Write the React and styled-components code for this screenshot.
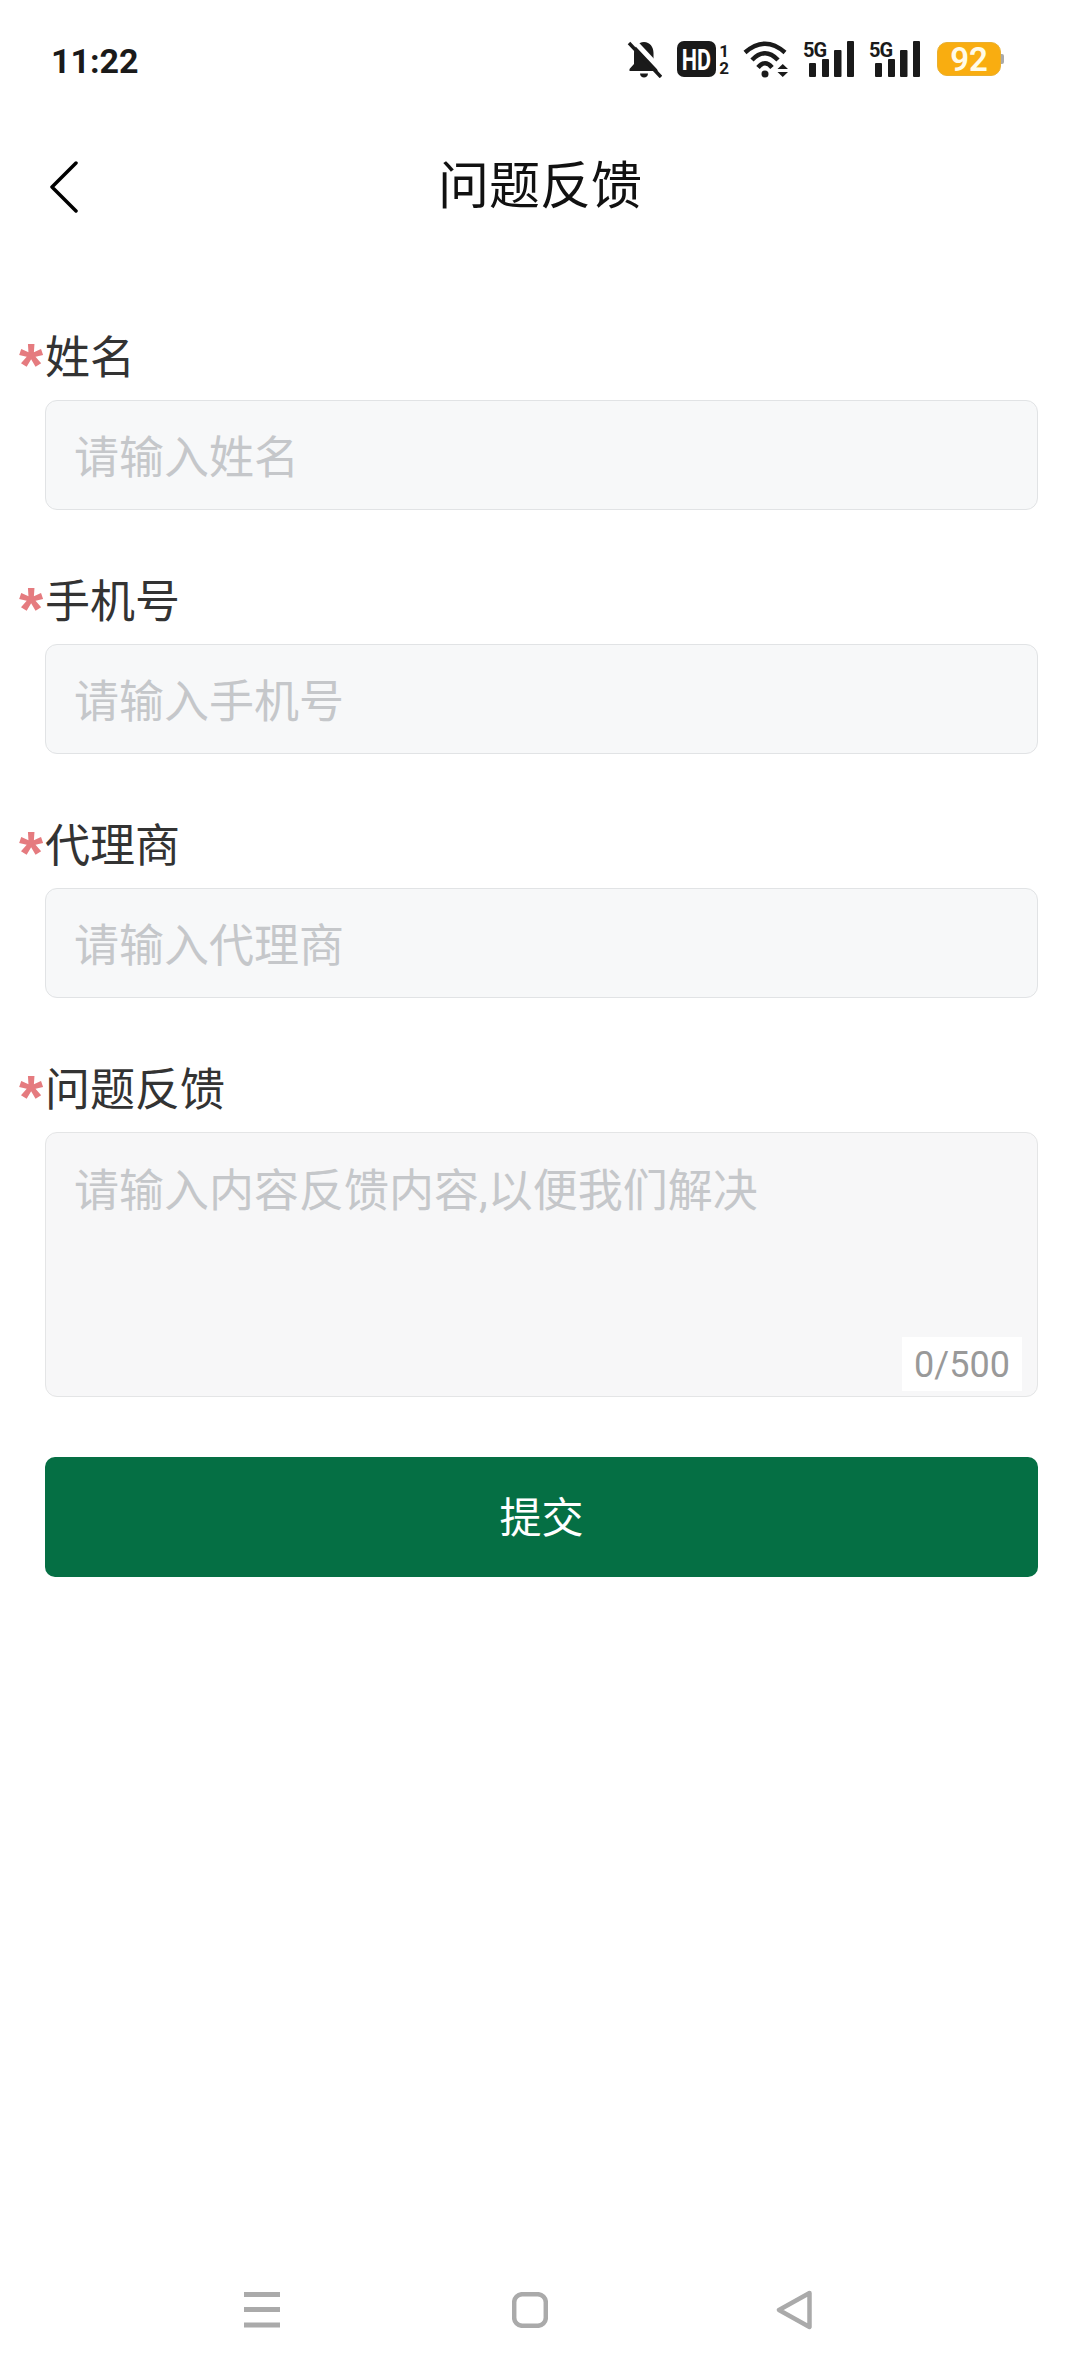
import styled, { createGlobalStyle } from "styled-components";

const fields = [
    { label: "姓名", placeholder: "请输入姓名" },
    { label: "手机号", placeholder: "请输入手机号" },
    { label: "代理商", placeholder: "请输入代理商" },
];

function Signal() {
    return (
        <SignalBox>
            <FiveG>5G</FiveG>
            <svg width="51" height="36" viewBox="0 0 51 36">
                <rect x="6" y="22" width="7" height="14" rx="1" fill="#1a1a1a" />
                <rect x="19" y="18" width="7" height="18" rx="1" fill="#1a1a1a" />
                <rect x="31" y="9" width="7.500" height="27" rx="1" fill="#1a1a1a" />
                <rect x="44" y="0" width="7" height="36" rx="1" fill="#1a1a1a" />
            </svg>
        </SignalBox>
    );
}

export default function App() {
    return (
        <Page>
            <GlobalStyle />
            <StatusBar>
                <Time>11:22</Time>
                <StatusIcons>
                    <svg width="35" height="37" viewBox="0 0 35 37">
                        <path d="M17 1c-6 0-10 5-10 11v11l-4.500 5v2h28v-2l-4-5V12c0-6-3.500-11-9.500-11z" fill="#1a1a1a" />
                        <path d="M13 32.500h8c0 2.500-2 4-4 4s-4-1.500-4-4z" fill="#1a1a1a" />
                        <path d="M6 -1L38 33" stroke="#fff" strokeWidth="5" />
                        <path d="M2 2L34 36" stroke="#1a1a1a" strokeWidth="3.500" />
                    </svg>
                    <HdGroup>
                        <HdBox><HdText>HD</HdText></HdBox>
                        <SimNumbers>
                            <span>1</span>
                            <span>2</span>
                        </SimNumbers>
                    </HdGroup>
                    <svg width="45" height="37" viewBox="0 0 45 37">
                        <path d="M2 11.500Q22 -6 42 11.500" fill="none" stroke="#1a1a1a" strokeWidth="4.500" />
                        <path d="M9 19Q22 5.500 35 19" fill="none" stroke="#1a1a1a" strokeWidth="4.500" />
                        <path d="M15 26.500Q22 18 29 26.500" fill="none" stroke="#1a1a1a" strokeWidth="4.500" />
                        <circle cx="22" cy="33" r="3.500" fill="#1a1a1a" />
                        <path d="M34.500 28l5.250-5 5.250 5zM34.500 31l5.250 5 5.250-5z" fill="#1a1a1a" />
                    </svg>
                    <Signal />
                    <Signal />
                    <Battery>
                        <BatteryBody>92</BatteryBody>
                        <BatteryCap />
                    </Battery>
                </StatusIcons>
            </StatusBar>

            <Header>
                <BackIcon width="30" height="52" viewBox="0 0 30 52">
                    <path d="M27 2 L3 26 L27 50" fill="none" stroke="#000" strokeWidth="3.500" strokeLinecap="round" strokeLinejoin="round" />
                </BackIcon>
                <Title>问题反馈</Title>
            </Header>

            <Form>
                {fields.map((field) => (
                    <Field key={field.label}>
                        <Label><Star>*</Star>{field.label}</Label>
                        <Input placeholder={field.placeholder} />
                    </Field>
                ))}
                <Field>
                    <Label><Star>*</Star>问题反馈</Label>
                    <AreaBox>
                        <Area placeholder="请输入内容反馈内容,以便我们解决" />
                        <Counter>0/500</Counter>
                    </AreaBox>
                </Field>
                <SubmitButton type="button">提交</SubmitButton>
            </Form>

            <NavBar>
                <svg width="36" height="36" viewBox="0 0 36 36">
                    <rect y="0" width="36" height="5" fill="#aaa" />
                    <rect y="15" width="36" height="5" fill="#aaa" />
                    <rect y="30.500" width="36" height="5" fill="#aaa" />
                </svg>
                <svg width="36" height="36" viewBox="0 0 36 36">
                    <rect x="2.200" y="2.200" width="31.600" height="31.600" rx="8" fill="none" stroke="#aaa" strokeWidth="4.500" />
                </svg>
                <svg width="36" height="40" viewBox="0 0 36 40">
                    <path d="M33.500 3 L3 20 L33.500 37 Z" fill="none" stroke="#aaa" strokeWidth="4.500" strokeLinejoin="round" />
                </svg>
            </NavBar>
        </Page>
    );
}

const GlobalStyle = createGlobalStyle`
    html, body {
        margin: 0;
        padding: 0;
        background-color: #fff;
    }

    * {
        box-sizing: border-box;
    }
`;

const Page = styled.div`
    display: flex;
    flex-direction: column;
    height: 2376px;
    width: 1080px;
    overflow: hidden;
    background-color: #fff;
    font-family: Roboto, "Noto Sans CJK SC", sans-serif;
`;

const StatusBar = styled.div`
    display: flex;
    justify-content: space-between;
    align-items: center;
    height: 80px;
    margin-top: 19px;
    padding: 0 76px 0 51px;
`;

const Time = styled.span`
    margin-top: 3px;
    font-size: 34px;
    font-weight: 700;
    color: #1a1a1a;
`;

const StatusIcons = styled.div`
    display: flex;
    align-items: center;
    gap: 15px;
`;

const HdGroup = styled.div`
    display: flex;
    align-items: center;
    gap: 4px;
`;

const HdBox = styled.span`
    display: flex;
    justify-content: center;
    align-items: center;
    height: 36px;
    width: 39px;
    border-radius: 7px;
    background-color: #1a1a1a;
    color: #fff;
    font-size: 30px;
    font-weight: 700;
`;

const HdText = styled.span`
    display: inline-block;
    transform: scaleX(0.72);
`;

const SimNumbers = styled.div`
    display: flex;
    flex-direction: column;
    justify-content: space-between;
    align-items: center;
    width: 8px;
    height: 31px;
    font-size: 17px;
    font-weight: 700;
    line-height: 14px;
    color: #1a1a1a;
`;

const SignalBox = styled.div`
    position: relative;
    height: 36px;
    width: 51px;
`;

const FiveG = styled.span`
    position: absolute;
    top: 0;
    left: 0;
    font-size: 20px;
    font-weight: 700;
    line-height: 18px;
    letter-spacing: -1px;
    color: #1a1a1a;
`;

const Battery = styled.div`
    display: flex;
    align-items: center;
    margin-left: 2px;
`;

const BatteryBody = styled.span`
    display: flex;
    justify-content: center;
    align-items: center;
    height: 34px;
    width: 64px;
    border-radius: 10px;
    border: 1px solid #eab02e;
    background-color: #f9ad10;
    color: #fffbe8;
    font-size: 33px;
    font-weight: 600;
`;

const BatteryCap = styled.span`
    height: 10px;
    width: 3px;
    border-radius: 0 2px 2px 0;
    background-color: #aaa;
`;

const Header = styled.header`
    position: relative;
    display: flex;
    justify-content: center;
    align-items: center;
    height: 171px;
`;

const BackIcon = styled.svg`
    position: absolute;
    left: 49px;
    top: 62px;
`;

const Title = styled.h1`
    margin: 0 0 6px;
    font-size: 51px;
    font-weight: 400;
    color: #111;
`;

const Form = styled.form`
    display: flex;
    flex-direction: column;
    gap: 60px;
    padding: 56px 42px 0 45px;
`;

const Field = styled.div`
    display: flex;
    flex-direction: column;
    gap: 14px;
`;

const Label = styled.label`
    display: flex;
    align-items: center;
    height: 60px;
    padding-top: 6px;
    font-size: 45px;
    line-height: 54px;
    color: #333;
`;

const Star = styled.span`
    margin-left: -26px;
    width: 26px;
    height: 60px;
    font-family: "Liberation Sans", sans-serif;
    font-size: 62px;
    font-weight: 700;
    line-height: 71px;
    color: #e57b7f;
`;

const Input = styled.input`
    display: block;
    height: 110px;
    width: 100%;
    padding: 6px 28px 0;
    border: 1.5px solid #e1e3e5;
    border-radius: 12px;
    outline: none;
    background-color: #f7f8f9;
    font-family: inherit;
    font-size: 45px;
    color: #333;

    &::placeholder {
        color: #c5c7ca;
        opacity: 1;
    }
`;

const AreaBox = styled.div`
    position: relative;
    height: 265px;
`;

const Area = styled.textarea`
    display: block;
    height: 100%;
    width: 100%;
    padding: 29px 28px;
    border: 1.5px solid #e4e5e6;
    border-radius: 12px;
    outline: none;
    resize: none;
    background-color: #f7f7f8;
    font-family: inherit;
    font-size: 45px;
    line-height: 60px;
    color: #333;

    &::placeholder {
        color: #c5c7ca;
        opacity: 1;
    }
`;

const Counter = styled.span`
    position: absolute;
    right: 16px;
    bottom: 6px;
    display: flex;
    justify-content: center;
    align-items: center;
    height: 54px;
    width: 120px;
    padding-top: 2px;
    background-color: #fff;
    font-size: 36px;
    color: #999;
`;

const SubmitButton = styled.button`
    height: 120px;
    width: 100%;
    padding: 0 0 6px;
    border: none;
    border-radius: 10px;
    background-color: #056f44;
    color: #fff;
    font-family: inherit;
    font-size: 42px;
    cursor: pointer;
`;

const NavBar = styled.nav`
    display: grid;
    grid-template-columns: 268px 264px 36px;
    align-items: center;
    margin-top: auto;
    height: 40px;
    margin-bottom: 46px;
    padding-left: 244px;
`;
